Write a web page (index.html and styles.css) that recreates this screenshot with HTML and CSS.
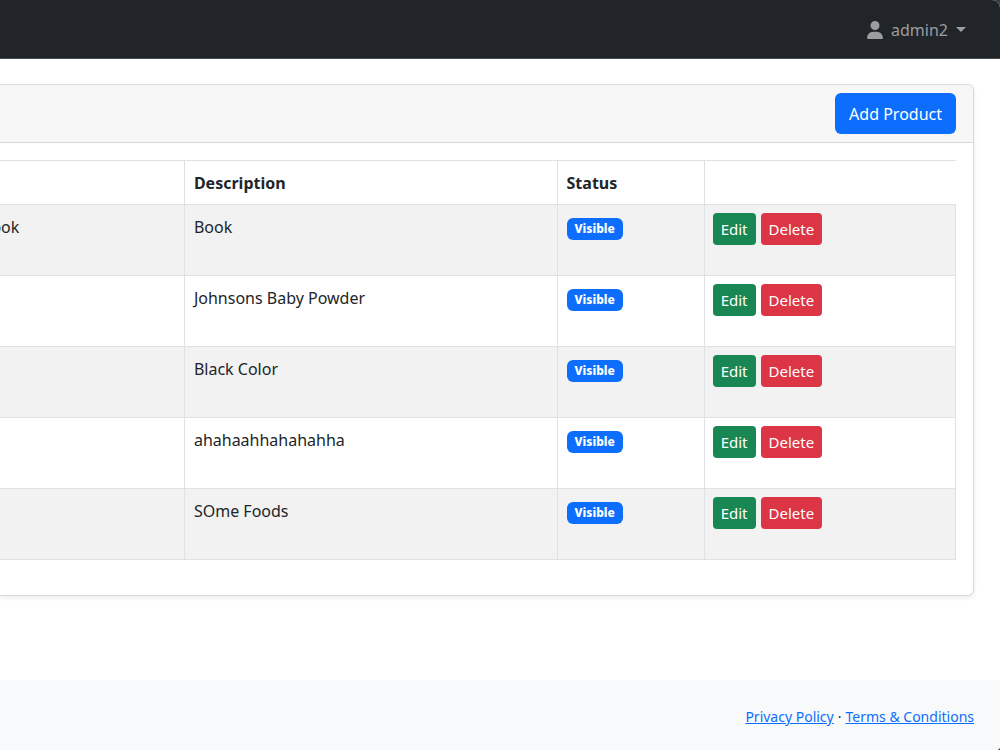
FILE: index.html
```
<!DOCTYPE html>
<html lang="en">
<head>
<meta charset="utf-8">
<title>Products</title>
<meta name="viewport" content="width=device-width, initial-scale=1">
<link rel="stylesheet" href="styles.css">
</head>
<body>
<div class="window">
<nav class="navbar">
<button class="user-menu" type="button">
<svg class="user-icon" viewBox="0 0 448 512" aria-hidden="true"><path d="M224 256a128 128 0 1 0 0-256a128 128 0 1 0 0 256zM178 304C80 304 0 384 0 482c0 17 13 30 30 30h388c17 0 30-13 30-30c0-98-80-178-178-178z"/></svg>
<span>admin2</span>
<span class="caret"></span>
</button>
</nav>
<main class="content">
<section class="card">
<header class="card-header"><button class="btn btn-primary" type="button">Add Product</button></header>
<div class="card-body">
<table class="products">
<colgroup><col class="col-name"><col class="col-description"><col class="col-status"><col class="col-actions"></colgroup>
<thead><tr><th></th><th>Description</th><th>Status</th><th></th></tr></thead>
<tbody>
<tr><td><span class="product-name">Book</span></td><td>Book</td><td><span class="badge">Visible</span></td><td><div class="actions"><button class="btn btn-sm btn-success" type="button">Edit</button><button class="btn btn-sm btn-danger" type="button">Delete</button></div></td></tr>
<tr><td></td><td>Johnsons Baby Powder</td><td><span class="badge">Visible</span></td><td><div class="actions"><button class="btn btn-sm btn-success" type="button">Edit</button><button class="btn btn-sm btn-danger" type="button">Delete</button></div></td></tr>
<tr><td></td><td>Black Color</td><td><span class="badge">Visible</span></td><td><div class="actions"><button class="btn btn-sm btn-success" type="button">Edit</button><button class="btn btn-sm btn-danger" type="button">Delete</button></div></td></tr>
<tr><td></td><td>ahahaahhahahahha</td><td><span class="badge">Visible</span></td><td><div class="actions"><button class="btn btn-sm btn-success" type="button">Edit</button><button class="btn btn-sm btn-danger" type="button">Delete</button></div></td></tr>
<tr><td></td><td>SOme Foods</td><td><span class="badge">Visible</span></td><td><div class="actions"><button class="btn btn-sm btn-success" type="button">Edit</button><button class="btn btn-sm btn-danger" type="button">Delete</button></div></td></tr>
</tbody>
</table>
</div>
</section>
</main>
<footer class="footer"><a href="#privacy">Privacy Policy</a><span>·</span><a href="#terms">Terms &amp; Conditions</a></footer>
</div>
</body>
</html>
```
FILE: styles.css
```
* { box-sizing: border-box; }
body {
  margin: 0;
  background: #3a3b3d;
  color: #212529;
  font-family: "Segoe UI", "Noto Sans", "Open Sans", sans-serif;
  font-size: 16px;
  line-height: 26px;
}
.window {
  min-height: 100vh;
  display: flex;
  flex-direction: column;
  overflow: hidden;
  background: #fff;
  border-radius: 0 8px 4px 0;
}
.navbar {
  display: flex;
  justify-content: flex-end;
  align-items: center;
  height: 59px;
  padding: 1px 34px 0;
  background: #212529;
  border-bottom: 1px solid #4a4d50;
}
.user-menu {
  display: flex;
  align-items: center;
  gap: 8px;
  padding: 0;
  border: 0;
  background: none;
  color: #9b9d9f;
  font: inherit;
}
.user-icon { width: 16px; height: 18px; fill: currentColor; }
.caret {
  border: 5px solid transparent;
  border-top-color: currentColor;
  border-bottom: 0;
}
.content { flex: 1; padding: 25px 26px 0 0; }
.card {
  border: 1px solid #d9d9d9;
  border-left: 0;
  border-radius: 0 6px 6px 0;
  box-shadow: 0 2px 4px rgba(0, 0, 0, 0.08);
}
.card-header {
  display: flex;
  justify-content: flex-end;
  padding: 8px 17px;
  background: #f7f7f7;
  border-bottom: 1px solid #d9d9d9;
  border-radius: 0 5px 0 0;
}
.btn {
  border: 0;
  border-radius: 6px;
  padding: 7px 14px;
  color: #fff;
  font: inherit;
}
.btn-primary { padding: 8px 14px 7px; background: #0d6efd; }
.btn-sm { padding: 4px 8px; border-radius: 4px; font-size: 15px; line-height: 24px; }
.btn-success { background: #198754; }
.btn-danger { background: #dc3545; }
.card-body { padding: 17px 17px 35px 0; }
.products {
  width: 100%;
  table-layout: fixed;
  border-collapse: collapse;
}
.col-name { width: 19.3%; }
.col-description { width: 39%; }
.col-status { width: 15.4%; }
.col-actions { width: 26.3%; }
.products th, .products td {
  padding: 9px;
  border: 1px solid #dee2e6;
  text-align: left;
  vertical-align: top;
}
.products tr > :first-child { border-left: 0; padding-left: 0; }
.products th { height: 44px; padding-bottom: 8px; font-weight: 700; }
.products th:last-child { border-right: 0; }
.products td { height: 71px; }
.products td:last-child { padding: 8px; }
.products tbody tr:nth-child(odd) { background: #f2f2f2; }
/* The name column starts beyond the left edge of the view. */
.product-name { margin-left: -19px; }
.badge {
  display: inline-block;
  padding: 4px 8px;
  border-radius: 6px;
  background: #0d6efd;
  color: #fff;
  font-size: 12px;
  font-weight: 800;
  line-height: 14px;
}
.actions { display: flex; gap: 5px; }
.footer {
  display: flex;
  justify-content: flex-end;
  gap: 4px;
  padding: 24px 26px 20px;
  background: #f8f9fa;
  font-size: 14px;
}
.footer a { color: #0d6efd; }
```
